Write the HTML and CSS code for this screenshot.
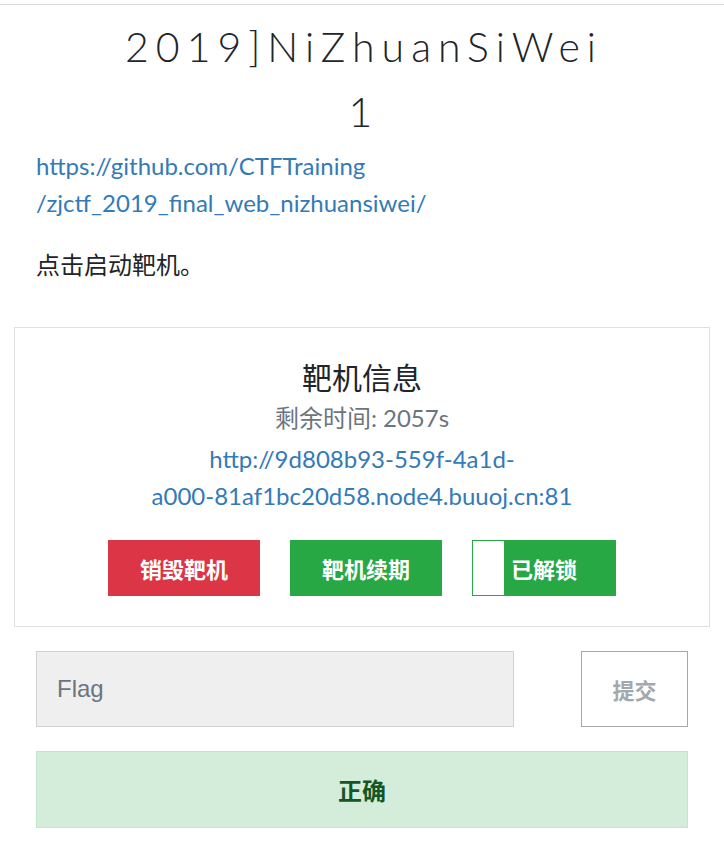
FILE: index.html
```html
<!DOCTYPE html>
<html lang="zh">
<head>
<meta charset="utf-8">
<title>NiZhuanSiWei</title>
<link rel="stylesheet" href="styles.css">
</head>
<body>
<div class="topbar"></div>
<div class="page">
  <h1 class="title">2019]NiZhuanSiWei<br>1</h1>
  <div class="desc">
    <p class="links"><a href="#">https://github.com/CTFTraining<br>/zjctf_2019_final_web_nizhuansiwei/</a></p>
    <p class="hint">点击启动靶机。</p>
  </div>
  <div class="card">
    <h2 class="card-title">靶机信息</h2>
    <p class="remain">剩余时间: 2057s</p>
    <p class="addr"><a href="#">http://9d808b93-559f-4a1d-<br>a000-81af1bc20d58.node4.buuoj.cn:81</a></p>
    <div class="actions">
      <button class="btn btn-red">销毁靶机</button>
      <button class="btn btn-green">靶机续期</button>
      <button class="btn btn-unlock">已解锁</button>
    </div>
  </div>
  <div class="submit-area">
    <div class="flag-row">
      <input class="flag-input" type="text" placeholder="Flag">
      <button class="submit-btn">提交</button>
    </div>
    <div class="alert">正确</div>
  </div>
</div>
</body>
</html>
```
FILE: styles.css
```css
html, body {
  margin: 0;
  padding: 0;
  background: #fff;
}
body {
  font-family: "Lato", "Noto Sans CJK SC", sans-serif;
  color: #212529;
  font-size: 24px;
  line-height: 37px;
}
.topbar {
  height: 4px;
  border-bottom: 1px solid #dcdcdc;
}
.page {
  display: flex;
  flex-direction: column;
}
.title {
  margin: 9px 0 0;
  padding-left: 4px;
  text-align: center;
  font-family: "Lato", sans-serif;
  font-weight: 300;
  font-size: 41px;
  line-height: 65px;
  letter-spacing: 7px;
  color: #212529;
}
.desc {
  padding: 0 36px;
}
.desc p {
  margin: 0;
}
.desc .links {
  margin-top: 3px;
}
a {
  color: #337ab7;
  text-decoration: none;
}
.desc .hint {
  margin-top: 25px;
}
.card {
  margin: 44px 14px 0;
  border: 1px solid #dfdfdf;
  padding: 31px 0 30px;
  text-align: center;
}
.card-title {
  margin: 0;
  font-size: 30px;
  font-weight: 400;
  line-height: 36px;
  color: #212529;
}
.remain {
  margin: 4px 0 0;
  color: #6c757d;
}
.addr {
  margin: 4px 0 0;
}
.actions {
  margin-top: 26px;
  display: flex;
  justify-content: center;
  gap: 30px;
}
.btn {
  height: 56px;
  width: 152px;
  border: 1px solid transparent;
  color: #fff;
  font-family: "Noto Sans CJK SC", sans-serif;
  font-weight: 700;
  font-size: 22px;
  padding: 0;
  cursor: pointer;
}
.btn-red {
  background: #dc3545;
  border-color: #dc3545;
}
.btn-green {
  background: #28a745;
  border-color: #28a745;
}
.btn-unlock {
  width: 144px;
  border-color: #28a745;
  background: linear-gradient(to right, #fff 31px, #28a745 31px);
}
.submit-area {
  padding: 24px 36px 0;
  display: flex;
  flex-direction: column;
  gap: 24px;
}
.flag-row {
  display: flex;
  justify-content: space-between;
}
.flag-input {
  width: 478px;
  height: 76px;
  box-sizing: border-box;
  background: #efefef;
  border: 1px solid #cfd3d7;
  padding: 0 20px;
  font-family: "Liberation Sans", sans-serif;
  font-size: 24px;
  color: #495057;
  outline: none;
}
.flag-input::placeholder {
  color: #6c757d;
}
.submit-btn {
  width: 107px;
  height: 76px;
  box-sizing: border-box;
  background: #fff;
  border: 1px solid #a5a9ad;
  color: #a3a8ad;
  font-family: "Noto Sans CJK SC", sans-serif;
  font-weight: 700;
  font-size: 22px;
  padding: 0;
}
.alert {
  height: 77px;
  box-sizing: border-box;
  background: #d4edda;
  border: 1px solid #c3e6cb;
  color: #155724;
  font-family: "Noto Sans CJK SC", sans-serif;
  font-weight: 700;
  font-size: 24px;
  display: flex;
  align-items: center;
  justify-content: center;
}
```
